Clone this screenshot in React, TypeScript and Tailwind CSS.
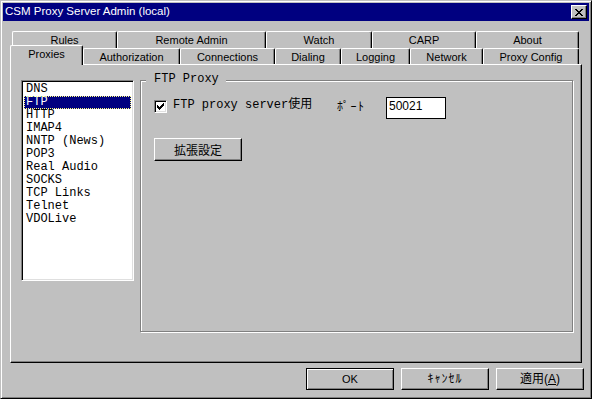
import React from "react";

// Win95-ish property sheet: CSM Proxy Server Admin
const sans = "font-['Liberation_Sans','Noto_Sans_CJK_JP',sans-serif]";
const mono = "font-['Liberation_Mono','Noto_Sans_CJK_JP',monospace]";

const raised =
  "border border-t-white border-l-white border-r-black border-b-black shadow-[inset_-1px_-1px_#808080] bg-[#c0c0c0]";
const sunken =
  "border border-t-[#808080] border-l-[#808080] border-r-white border-b-white shadow-[inset_1px_1px_#000,inset_-1px_-1px_#dfdfdf]";

const backTabs = [
  { label: "Rules", w: "w-[105px]" },
  { label: "Remote Admin", w: "w-[149px]" },
  { label: "Watch", w: "w-[106px]" },
  { label: "CARP", w: "w-[104px]" },
  { label: "About", w: "w-[103px]" },
];

const frontTabs = [
  { label: "Authorization", w: "w-[97px]" },
  { label: "Connections", w: "w-[95px]" },
  { label: "Dialing", w: "w-[66px]" },
  { label: "Logging", w: "w-[69px]" },
  { label: "Network", w: "w-[73px]" },
  { label: "Proxy Config", w: "w-[96px]" },
];

const protocols = [
  "DNS",
  "FTP",
  "HTTP",
  "IMAP4",
  "NNTP (News)",
  "POP3",
  "Real Audio",
  "SOCKS",
  "TCP Links",
  "Telnet",
  "VDOLive",
];

const tabEdge =
  "border-l border-t border-r border-l-white border-t-white border-r-black rounded-t-[2px] shadow-[inset_-1px_0_#808080] flex items-center justify-center";

const CloseGlyph = () => (
  <svg width="8" height="7" viewBox="0 0 8 7" shapeRendering="crispEdges">
    <path
      fill="#000"
      d="M0 0h2v1H0zM6 0h2v1H6zM1 1h2v1H1zM5 1h2v1H5zM2 2h4v1H2zM3 3h2v1H3zM2 4h4v1H2zM1 5h2v1H1zM5 5h2v1H5zM0 6h2v1H0zM6 6h2v1H6z"
    />
  </svg>
);

const CheckGlyph = () => (
  <svg width="7" height="7" viewBox="0 0 7 7" shapeRendering="crispEdges">
    <path
      fill="#000"
      d="M6 0h1v1H6zM5 1h2v1H5zM0 2h1v1H0zM4 2h3v1H4zM0 3h2v1H0zM3 3h3v1H3zM0 4h5v1H0zM1 5h3v1H1zM2 6h1v1H2z"
    />
  </svg>
);

export default function App() {
  return (
    <div
      className={`w-[592px] h-[399px] bg-[#c0c0c0] border border-t-[#c0c0c0] border-l-[#c0c0c0] border-r-black border-b-black shadow-[inset_1px_1px_#fff,inset_-1px_-1px_#808080] p-[2px] flex flex-col select-none text-black ${sans}`}
    >
      {/* Title bar */}
      <div className="h-[18px] bg-[#000080] flex items-center justify-between pl-[2px] pr-[2px]">
        <span className="text-white text-[11.5px] leading-none">CSM Proxy Server Admin (local)</span>
        <div className={`w-[16px] h-[14px] flex items-center justify-center ${raised}`}>
          <CloseGlyph />
        </div>
      </div>

      <div className="flex flex-col pl-[7px] pr-[5px] pt-[10px]">
        <div className="w-[572px] flex flex-col">
          {/* back row of tabs */}
          <div className="flex h-[17px] pl-[2px]">
            {backTabs.map((t) => (
              <div key={t.label} className={`${t.w} h-[17px] text-[11px] leading-none ${tabEdge}`}>
                {t.label}
              </div>
            ))}
          </div>

          {/* front row of tabs */}
          <div className="flex h-[16px] items-end">
            <div className={`relative z-10 w-[73px] h-[20px] -mb-[1px] pb-[3px] bg-[#c0c0c0] text-[11px] leading-none ${tabEdge}`}>
              Proxies
            </div>
            {frontTabs.map((t) => (
              <div key={t.label} className={`${t.w} h-[16px] pt-[1px] text-[11px] leading-none ${tabEdge}`}>
                {t.label}
              </div>
            ))}
          </div>

          {/* tab page */}
          <div className="h-[299px] border border-t-white border-l-white border-r-black border-b-black shadow-[inset_-1px_-1px_#808080] flex items-start pl-[10px] pt-[15px]">
            <div className={`w-[113px] h-[201px] bg-white p-[2px] ${sunken}`}>
              {protocols.map((p) => (
                <div
                  key={p}
                  className={`h-[13px] leading-[13px] pl-[2px] text-[12px] whitespace-pre ${mono} ${
                    p === "FTP"
                      ? "bg-[#000080] text-white outline-1 outline-dotted outline-[#ffff7f] -outline-offset-1"
                      : ""
                  }`}
                >
                  {p}
                </div>
              ))}
            </div>

            {/* FTP Proxy group */}
            <div className="relative ml-[6px] w-[433px] h-[252px] border border-[#808080] shadow-[inset_1px_1px_#fff,1px_1px_#fff] pl-[13px] pt-[16px]">
              <span className={`absolute left-[5px] -top-[8px] pl-[8px] pr-[7px] bg-[#c0c0c0] text-[12px] leading-[13px] ${mono}`}>
                FTP Proxy
              </span>

              <div className="flex items-start h-[22px]">
                <div className={`w-[13px] h-[13px] mt-[3px] bg-white flex items-center justify-center ${sunken}`}>
                  <CheckGlyph />
                </div>
                <span className={`w-[164px] ml-[6px] mt-[2px] text-[12px] leading-[13px] whitespace-pre ${mono}`}>
                  FTP proxy server使用
                </span>
                <span className="w-[49px] mt-[2px] text-[12px] leading-[13px] tracking-[1.5px] font-['Noto_Sans_CJK_JP',sans-serif]">
                  ﾎﾟｰﾄ
                </span>
                <div className="w-[60px] h-[22px] bg-white border border-black pl-[2px] pt-[1px] text-[12px] leading-[14px]">
                  50021
                </div>
              </div>

              <button
                className={`mt-[19px] w-[88px] h-[23px] flex items-center justify-center text-[12px] leading-none font-['Noto_Sans_CJK_JP',sans-serif] ${raised}`}
              >
                拡張設定
              </button>
            </div>
          </div>
        </div>

        {/* dialog buttons */}
        <div className="flex justify-end gap-[7px] mt-[5px]">
          <button className="w-[88px] h-[22px] bg-[#c0c0c0] border border-black shadow-[inset_1px_1px_#fff,inset_-1px_-1px_#808080] flex items-center justify-center text-[11px] leading-none">
            OK
          </button>
          <button className={`w-[88px] h-[22px] flex items-center justify-center text-[12px] leading-none tracking-[1px] ${raised}`}>
            ｷｬﾝｾﾙ
          </button>
          <button className={`w-[88px] h-[22px] flex items-center justify-center text-[12px] leading-none ${raised}`}>
            適用(<span className="underline">A</span>)
          </button>
        </div>
      </div>
    </div>
  );
}
